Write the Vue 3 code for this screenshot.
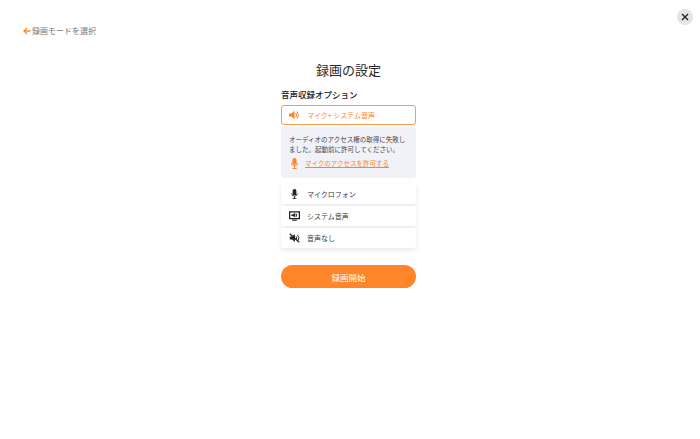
<script setup>
const others = [
  { key: 'mic', label: 'マイクロフォン' },
  { key: 'sys', label: 'システム音声' },
  { key: 'mute', label: '音声なし' },
]
</script>

<template>
  <div class="page">
    <header class="top">
      <a class="back">
        <svg class="back-arrow" viewBox="0 0 8 8" width="8" height="8"><path d="M4 1 1 4l3 3M1 4h6.500" fill="none" stroke="#ff8a2b" stroke-width="1.300"/></svg>
        <span>録画モードを選択</span>
      </a>
      <button class="close">
        <svg viewBox="0 0 8 8" width="8" height="8"><path d="M1 1l6 6M7 1 1 7" stroke="#222" stroke-width="1.400"/></svg>
      </button>
    </header>
    <main class="panel">
      <h1>録画の設定</h1>
      <h2>音声収録オプション</h2>
      <div class="option selected">
        <svg class="icon" viewBox="0 0 14 12"><path d="M0 4h3l4-3.500v11L3 8H0z" fill="#ff8429"/><path d="M8.500 3.500a3.500 3.500 0 0 1 0 5M10 1.800a6 6 0 0 1 0 8.400" fill="none" stroke="#ff8429" stroke-width="1.300"/></svg>
        <span>マイク+ システム音声</span>
      </div>
      <div class="notice">
        <p>オーディオのアクセス権の取得に失敗しました。起動前に許可してください。</p>
        <div class="grant">
          <svg class="icon mic" viewBox="0 0 14 16"><rect x="4" y="0" width="6" height="10" rx="3" fill="#ff8429"/><path d="M2.500 7a4.500 4.500 0 0 0 9 0M7 11.500V16" fill="none" stroke="#ff8429" stroke-width="1.400"/><path d="M4 15.300h6" stroke="#ff8429" stroke-width="1.400"/></svg>
          <a>マイクのアクセスを許可する</a>
        </div>
      </div>
      <div class="others">
        <div v-for="o in others" :key="o.key" class="option">
          <svg v-if="o.key === 'mic'" class="icon" viewBox="0 0 14 16"><rect x="4" y="0" width="6" height="10" rx="3" fill="#222"/><path d="M2.500 7a4.500 4.500 0 0 0 9 0M7 11.500V16" fill="none" stroke="#222" stroke-width="1.400"/><path d="M4 15.300h6" stroke="#222" stroke-width="1.400"/></svg>
          <svg v-else-if="o.key === 'sys'" class="icon" viewBox="0 0 14 12"><path d="M.8.800h12.400v8.400H.8z" fill="none" stroke="#222" stroke-width="1.600"/><path d="M4 11.300h6" stroke="#222" stroke-width="1.400"/><path d="M3 4h2l3-2v6L5 6H3z" fill="#222"/><path d="M9.500 3.200v3.600" stroke="#222" stroke-width="1.200"/></svg>
          <svg v-else class="icon" viewBox="0 0 14 12"><path d="M1 4h3l3.500-3v10L4 8H1z" fill="#222"/><path d="M9 4a3 3 0 0 1 0 4M10.500 2a6 6 0 0 1 1.500 7" fill="none" stroke="#222" stroke-width="1.200"/><path d="M1 .5l12 11" stroke="#222" stroke-width="1.600"/></svg>
          <span>{{ o.label }}</span>
        </div>
      </div>
      <button class="start">録画開始</button>
    </main>
  </div>
</template>

<style scoped>
.page {
  width: 700px;
  height: 439px;
  background: #fff;
  font-family: "Noto Sans CJK JP", "Noto Sans", sans-serif;
  display: flex;
  flex-direction: column;
  overflow: hidden;
}
.top {
  display: flex;
  justify-content: space-between;
  align-items: flex-start;
  padding: 9px 7px 0 23px;
  height: 61px;
  box-sizing: border-box;
}
.back {
  display: flex;
  align-items: center;
  gap: 1px;
  margin-top: 14px;
  font-size: 8px;
  line-height: 16px;
  color: #77777f;
}
.close {
  width: 16px;
  height: 16px;
  padding: 0;
  border: 0;
  border-radius: 50%;
  background: #e4e4e4;
  display: flex;
  align-items: center;
  justify-content: center;
}
.panel {
  width: 135px;
  margin-left: 281px;
  display: flex;
  flex-direction: column;
}
h1 {
  margin: 0;
  font-size: 13px;
  line-height: 18px;
  font-weight: 400;
  text-align: center;
  color: #26262c;
}
h2 {
  margin: 8px 0 4px;
  font-size: 8.500px;
  line-height: 14px;
  font-weight: 500;
  color: #16161c;
}
.option {
  height: 20px;
  box-sizing: border-box;
  display: flex;
  align-items: center;
  padding-left: 8px;
  font-size: 7px;
  line-height: 10px;
  color: #3a3a40;
  background: #fff;
  box-shadow: 0 2px 5px rgba(40, 40, 70, 0.1);
  border-radius: 2px;
}
.option.selected {
  border: 1px solid #ff9a4c;
  border-radius: 3px;
  color: #ff8429;
  box-shadow: none;
  padding-left: 7px;
}
.icon {
  flex: none;
  width: 11px;
  height: 10px;
  margin-right: 7px;
}
.notice {
  margin-top: 2px;
  height: 51px;
  box-sizing: border-box;
  background: #f1f2f7;
  border-radius: 3px;
  padding: 7px 8px 0;
}
.notice p {
  margin: 0;
  font-size: 6.500px;
  line-height: 10px;
  color: #44444c;
}
.grant {
  display: flex;
  align-items: center;
  margin-top: 4px;
  line-height: 11px;
}
.grant .icon {
  margin-right: 5px;
  height: 11px;
}
.grant a {
  font-size: 6.500px;
  color: #ff8429;
  text-decoration: underline;
}
.others {
  display: flex;
  flex-direction: column;
  gap: 2px;
  margin-top: 6px;
}
.start {
  margin-top: 17px;
  height: 23px;
  border: 0;
  border-radius: 12px;
  background: #ff852b;
  color: #fff;
  font: inherit;
  font-size: 8.500px;
  font-weight: 400;
  padding: 0;
}
</style>
